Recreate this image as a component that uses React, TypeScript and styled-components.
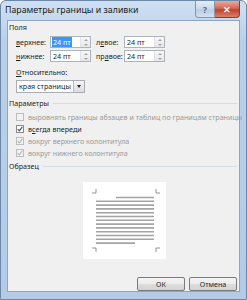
import styled, { createGlobalStyle } from 'styled-components';

const GlobalStyle = createGlobalStyle`
  html, body {
    margin: 0;
    padding: 0;
    background: #ffffff;
  }
  body {
    font-family: "Noto Sans", "Open Sans", sans-serif;
    font-size: 7.15px;
    color: #1e1e1e;
  }
`;

const S = {
  Window: styled.div`
    width: 247px;
    height: 300px;
    box-sizing: border-box;
    display: flex;
    flex-direction: column;
    padding: 0 6px 7px;
    border: 1px solid #6d87a6;
    border-radius: 6px 6px 0 0;
    background: linear-gradient(#cfe0f3, #b9d0ea 40px, #b4cbe7);
  `,
  TitleBar: styled.div`
    height: 21px;
    display: flex;
    align-items: flex-start;
  `,
  Title: styled.div`
    padding-top: 3px;
    margin-left: -2px;
    font-size: 8.8px;
    color: #1a1a1a;
  `,
  Caption: styled.div`
    margin-left: auto;
    display: flex;
  `,
  CapButton: styled.div<{ $close?: boolean }>`
    width: ${(p) => (p.$close ? '25px' : '20px')};
    height: 17px;
    box-sizing: border-box;
    display: flex;
    align-items: center;
    justify-content: center;
    border: 1px solid ${(p) => (p.$close ? '#8d3a2f' : '#8096b2')};
    border-top: none;
    border-left: ${(p) => (p.$close ? 'none' : undefined)};
    border-radius: ${(p) => (p.$close ? '0 0 4px 0' : '0 0 0 4px')};
    background: ${(p) =>
      p.$close
        ? 'linear-gradient(#e9a99c, #d46a55 45%, #c2402a 55%, #d9836d)'
        : 'linear-gradient(#e6eef8, #c9d8ea 50%, #b9cce3 55%, #d3e1f0)'};
    color: ${(p) => (p.$close ? '#ffffff' : '#5d6f88')};
    font-size: 9px;
    font-weight: 700;
  `,
  Client: styled.div`
    flex: 1;
    display: flex;
    flex-direction: column;
    padding: 0 2px 0 1px;
    background: #f0f0f0;
    border: 1px solid #8fa4bf;
  `,
  GroupHeader: styled.div<{ $top: number }>`
    display: flex;
    align-items: center;
    gap: 4px;
    height: 10px;
    margin-top: ${(p) => p.$top}px;
    color: #1e1e1e;
    white-space: nowrap;
  `,
  Rule: styled.div`
    flex: 1;
    height: 1px;
    background: #d5dde6;
  `,
  Fields: styled.div`
    display: grid;
    grid-template-columns: 34px 41px 33px 41px;
    row-gap: 2px;
    margin: 4px 0 0 7px;
    align-items: center;
  `,
  FieldLabel: styled.div<{ $gap?: number }>`
    margin-left: ${(p) => p.$gap || 0}px;
    white-space: nowrap;
  `,
  Spin: styled.div`
    width: 41px;
    height: 12px;
    box-sizing: border-box;
    display: flex;
    border: 1px solid #abb3bd;
    background: #ffffff;
  `,
  SpinText: styled.div`
    flex: 1;
    display: flex;
    align-items: center;
    padding-left: 2px;
    line-height: 10px;
    white-space: nowrap;
  `,
  Selected: styled.span`
    background: #3399ff;
    color: #ffffff;
    padding: 0 1px;
    margin-left: -1px;
  `,
  SpinArrows: styled.div`
    width: 9px;
    display: flex;
    flex-direction: column;
    border-left: 1px solid #dfe3e8;
    background: linear-gradient(#f7f7f7, #e8e8e8);
  `,
  Arrow: styled.div<{ $down?: boolean }>`
    flex: 1;
    display: flex;
    align-items: center;
    justify-content: center;
    &::after {
      content: '';
      border-left: 2px solid transparent;
      border-right: 2px solid transparent;
      ${(p) => (p.$down ? 'border-top' : 'border-bottom')}: 2px solid #a3a3a3;
    }
  `,
  Label: styled.div<{ $top: number }>`
    margin: ${(p) => p.$top}px 0 0 7px;
    line-height: 10px;
  `,
  Select: styled.div`
    width: 69px;
    height: 13px;
    box-sizing: border-box;
    display: flex;
    margin: 3px 0 0 7px;
    border: 1px solid #a7aeb8;
    background: #ffffff;
  `,
  SelectText: styled.div`
    flex: 1;
    padding-left: 2px;
    line-height: 11px;
    white-space: nowrap;
  `,
  SelectButton: styled.div`
    width: 10px;
    display: flex;
    align-items: center;
    justify-content: center;
    border-left: 1px solid #b7bcc2;
    background: linear-gradient(#f4f4f4, #dcdcdc);
    &::after {
      content: '';
      border-left: 2.5px solid transparent;
      border-right: 2.5px solid transparent;
      border-top: 3px solid #222222;
    }
  `,
  Checks: styled.div`
    display: flex;
    flex-direction: column;
    gap: 3px;
    margin: 4px 0 0 7px;
  `,
  CheckRow: styled.div<{ $disabled?: boolean }>`
    display: flex;
    align-items: center;
    gap: 4px;
    height: 9px;
    color: ${(p) => (p.$disabled ? '#9a9a9a' : '#1e1e1e')};
    white-space: nowrap;
  `,
  Box: styled.div<{ $disabled?: boolean }>`
    flex-shrink: 0;
    width: 8px;
    height: 8px;
    box-sizing: border-box;
    display: flex;
    align-items: center;
    justify-content: center;
    border: 1px solid ${(p) => (p.$disabled ? '#bdbdbd' : '#8a8a8a')};
    background: ${(p) => (p.$disabled ? '#f2f2f2' : '#fbfbfb')};
  `,
  PreviewWrap: styled.div`
    display: flex;
    justify-content: center;
    margin-top: 11px;
    padding-left: 2px;
  `,
  Preview: styled.div`
    width: 83px;
    height: 77px;
    background: #ffffff;
  `,
  Buttons: styled.div`
    display: flex;
    justify-content: flex-end;
    gap: 4px;
    margin-top: 18px;
  `,
  Button: styled.div`
    width: 48px;
    height: 14px;
    box-sizing: border-box;
    display: flex;
    align-items: center;
    justify-content: center;
    border: 1px solid #7a7a7a;
    border-radius: 2px;
    background: linear-gradient(#f4f4f4, #ececec 50%, #dedede 50%, #d2d2d2);
    color: #1e1e1e;
  `,
};

const u = (s: string) => <u>{s}</u>;

const Spinner = ({ value, selected }: { value: string; selected?: boolean }) => (
  <S.Spin>
    <S.SpinText>{selected ? <S.Selected>{value}</S.Selected> : value}</S.SpinText>
    <S.SpinArrows>
      <S.Arrow />
      <S.Arrow $down />
    </S.SpinArrows>
  </S.Spin>
);

const Check = ({ checked, disabled, children }: { checked?: boolean; disabled?: boolean; children: React.ReactNode }) => (
  <S.CheckRow $disabled={disabled}>
    <S.Box $disabled={disabled}>
      {checked && (
        <svg width="6" height="6" viewBox="0 0 6 6">
          <path d="M0.8 3.2 L2.3 4.8 L5.3 0.8" fill="none" stroke={disabled ? '#b4b4b4' : '#3a4f6e'} strokeWidth="1.1" />
        </svg>
      )}
    </S.Box>
    <span>{children}</span>
  </S.CheckRow>
);

const lineYs = Array.from({ length: 13 }, (_, i) => 15.5 + i * 3.8);

const PageSample = () => (
  <svg width="83" height="77" viewBox="0 0 83 77">
    <g stroke="#7a7a7a" strokeWidth="0.8" fill="none">
      <path d="M13 7 V11 H9" />
      <path d="M73 7 V11 H77" />
      <path d="M13 70 V66 H9" />
      <path d="M73 70 V66 H77" />
    </g>
    <g stroke="#a4a4a4" strokeWidth="1.6">
      {lineYs.map((y, i) => {
        const x1 = i === 0 ? 33 : 13;
        const x2 = i === lineYs.length - 1 ? 52 : 71;
        return <line key={i} x1={x1} y1={y} x2={x2} y2={y} />;
      })}
    </g>
  </svg>
);

export default function App() {
  return (
    <>
      <GlobalStyle />
      <S.Window>
        <S.TitleBar>
          <S.Title>Параметры границы и заливки</S.Title>
          <S.Caption>
            <S.CapButton>?</S.CapButton>
            <S.CapButton $close>✕</S.CapButton>
          </S.Caption>
        </S.TitleBar>
        <S.Client>
          <S.GroupHeader $top={1}>
            <span>Поля</span>
          </S.GroupHeader>
          <S.Fields>
            <S.FieldLabel>{u('в')}ерхнее:</S.FieldLabel>
            <Spinner value="24 пт" selected />
            <S.FieldLabel $gap={5}>л{u('е')}вое:</S.FieldLabel>
            <Spinner value="24 пт" />
            <S.FieldLabel>{u('н')}ижнее:</S.FieldLabel>
            <Spinner value="24 пт" />
            <S.FieldLabel $gap={5}>пр{u('а')}вое:</S.FieldLabel>
            <Spinner value="24 пт" />
          </S.Fields>
          <S.Label $top={5}>{u('О')}тносительно:</S.Label>
          <S.Select>
            <S.SelectText>края страницы</S.SelectText>
            <S.SelectButton />
          </S.Select>
          <S.GroupHeader $top={5}>
            <span>Параметры</span>
            <S.Rule />
          </S.GroupHeader>
          <S.Checks>
            <Check disabled>выровнять границы абзацев и таблиц по границам страницы</Check>
            <Check checked>в{u('с')}егда впереди</Check>
            <Check checked disabled>вокруг верхнего колонтитула</Check>
            <Check checked disabled>вокруг нижнего колонтитула</Check>
          </S.Checks>
          <S.GroupHeader $top={4}>
            <span>Образец</span>
            <S.Rule />
          </S.GroupHeader>
          <S.PreviewWrap>
            <S.Preview>
              <PageSample />
            </S.Preview>
          </S.PreviewWrap>
          <S.Buttons>
            <S.Button>ОК</S.Button>
            <S.Button>Отмена</S.Button>
          </S.Buttons>
        </S.Client>
      </S.Window>
    </>
  );
}
